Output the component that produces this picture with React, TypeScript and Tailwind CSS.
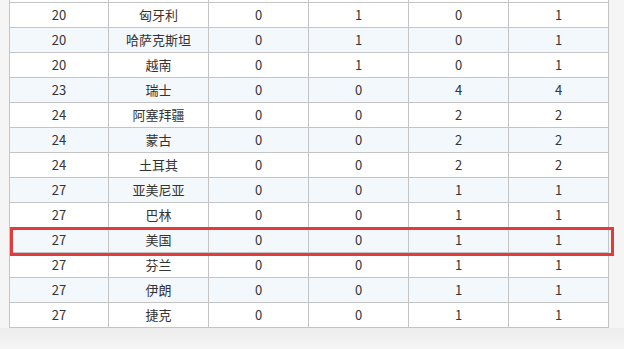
import React from 'react';

type Row = { rank: number; name: string; gold: number; silver: number; bronze: number; total: number };

const rows: Row[] = [
  { rank: 20, name: '匈牙利', gold: 0, silver: 1, bronze: 0, total: 1 },
  { rank: 20, name: '哈萨克斯坦', gold: 0, silver: 1, bronze: 0, total: 1 },
  { rank: 20, name: '越南', gold: 0, silver: 1, bronze: 0, total: 1 },
  { rank: 23, name: '瑞士', gold: 0, silver: 0, bronze: 4, total: 4 },
  { rank: 24, name: '阿塞拜疆', gold: 0, silver: 0, bronze: 2, total: 2 },
  { rank: 24, name: '蒙古', gold: 0, silver: 0, bronze: 2, total: 2 },
  { rank: 24, name: '土耳其', gold: 0, silver: 0, bronze: 2, total: 2 },
  { rank: 27, name: '亚美尼亚', gold: 0, silver: 0, bronze: 1, total: 1 },
  { rank: 27, name: '巴林', gold: 0, silver: 0, bronze: 1, total: 1 },
  { rank: 27, name: '美国', gold: 0, silver: 0, bronze: 1, total: 1 },
  { rank: 27, name: '芬兰', gold: 0, silver: 0, bronze: 1, total: 1 },
  { rank: 27, name: '伊朗', gold: 0, silver: 0, bronze: 1, total: 1 },
  { rank: 27, name: '捷克', gold: 0, silver: 0, bronze: 1, total: 1 },
];

const cols = 'grid grid-cols-[99px_100px_100px_100px_100px_100px]';
const cell = 'border-r border-b border-[#c4c4c4] flex items-center justify-center';

export default function App() {
  return (
    <div
      className="relative w-[624px] h-[349px] overflow-hidden bg-[#f5f5f5] text-[13px] text-[#333]"
      style={{ fontFamily: '"Microsoft YaHei", "Noto Sans CJK SC", "Noto Sans", sans-serif' }}
    >
      <div className="ml-[9px] w-[600px] bg-white border-l border-[#c4c4c4]">
        {/* tail of the row scrolled out above */}
        <div className={cols}>
          {Array.from({ length: 6 }).map((_, i) => (
            <div key={i} className={`${cell} h-[3px]`} />
          ))}
        </div>
        {rows.map((r, idx) => (
          <div key={r.name} className={`${cols} ${idx % 2 === 1 ? 'bg-[#f3f8fd]' : 'bg-white'}`}>
            <div className={`${cell} h-[25px]`}>{r.rank}</div>
            <div className={`${cell} h-[25px]`}>{r.name}</div>
            <div className={`${cell} h-[25px]`}>{r.gold}</div>
            <div className={`${cell} h-[25px]`}>{r.silver}</div>
            <div className={`${cell} h-[25px]`}>{r.bronze}</div>
            <div className={`${cell} h-[25px]`}>{r.total}</div>
          </div>
        ))}
      </div>
      <div className="h-[22px] bg-gradient-to-b from-[#ececec] to-[#f6f6f6]" />

      {/* highlight box */}
      <div className="absolute left-[10px] top-[227px] w-[604px] h-[29px] border-[3px] border-[#e23b3b]" />
    </div>
  );
}
